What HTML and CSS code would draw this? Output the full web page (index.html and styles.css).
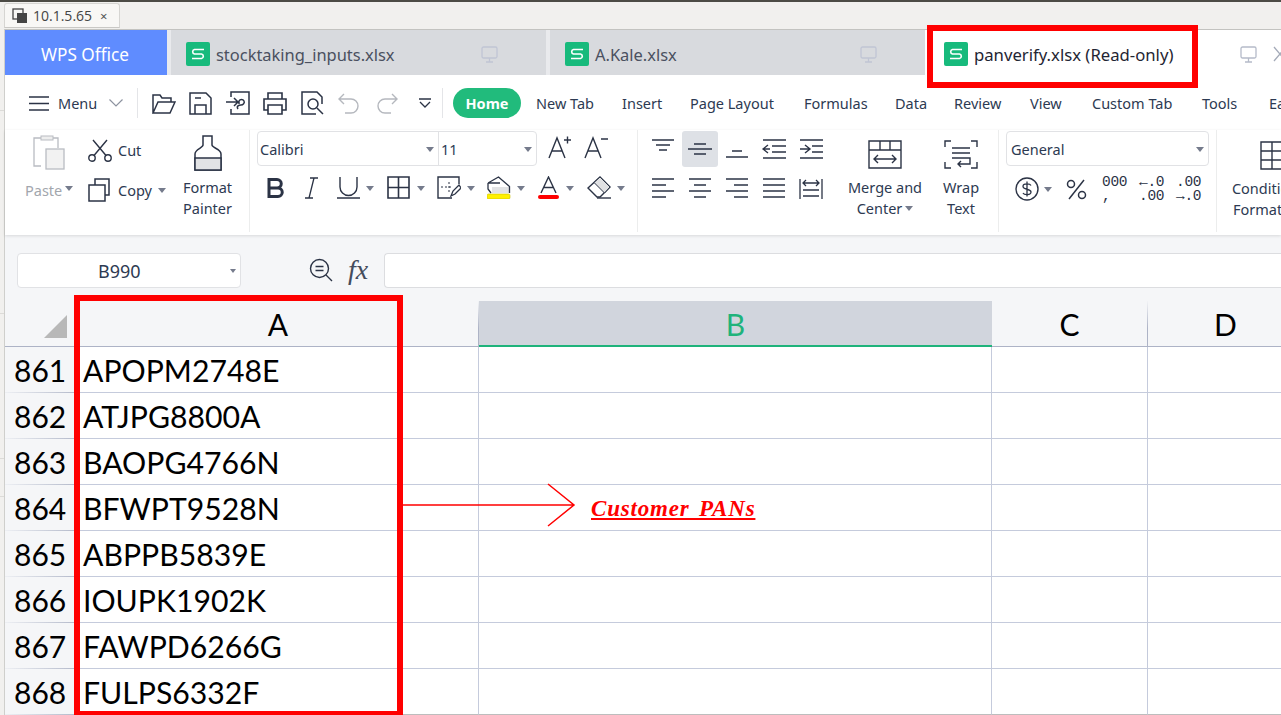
FILE: index.html
```html
<!DOCTYPE html>
<html lang="en">
<head>
<meta charset="utf-8">
<title>panverify.xlsx</title>
<link rel="stylesheet" href="styles.css">
</head>
<body>
<svg class="defs" width="0" height="0">
  <symbol id="logo" viewBox="0 0 24 24">
    <rect width="24" height="24" rx="2" fill="#17ba7c"/>
    <path d="M18 7.500H8.500a2.300 2.300 0 0 0 0 4.500h7a2.300 2.300 0 0 1 0 4.500H6" fill="none" stroke="#fff" stroke-width="1.600"/>
  </symbol>
  <symbol id="monitor" viewBox="0 0 17 17">
    <rect x="1" y="1" width="15" height="11" rx="1.500" fill="none" stroke="currentColor" stroke-width="1.300"/>
    <path d="M8.500 12v4M5 16h7" stroke="currentColor" stroke-width="1.300" fill="none"/>
  </symbol>
</svg>

<header class="browser">
  <div class="browser-tab">
    <svg class="browser-icon" width="16" height="16" viewBox="0 0 16 16"><rect x="1" y="1" width="10" height="10" fill="#f7f6f4" stroke="#444" stroke-width="1.300"/><rect x="5" y="5" width="10" height="10" fill="#444"/></svg>
    <span class="browser-title">10.1.5.65</span>
    <span class="browser-close">×</span>
  </div>
</header>

<main class="app">
  <nav class="tabs">
    <div class="tab-home">WPS Office</div>
    <div class="doc-tab doc-tab-gray">
      <svg class="logo" width="24" height="24"><use href="#logo"/></svg>
      <span class="doc-name">stocktaking_inputs.xlsx</span>
      <svg class="monitor" width="17" height="17"><use href="#monitor"/></svg>
    </div>
    <div class="doc-tab doc-tab-gray">
      <svg class="logo" width="24" height="24"><use href="#logo"/></svg>
      <span class="doc-name">A.Kale.xlsx</span>
      <svg class="monitor" width="17" height="17"><use href="#monitor"/></svg>
    </div>
    <div class="doc-tab doc-tab-active">
      <svg class="logo" width="24" height="24"><use href="#logo"/></svg>
      <span class="doc-name doc-name-active">panverify.xlsx (Read-only)</span>
      <svg class="monitor" width="17" height="17"><use href="#monitor"/></svg>
      <svg class="tab-x" width="14" height="16" viewBox="0 0 14 16"><path d="M1 1l12 14M13 1L1 15" stroke="#a4aab8" stroke-width="1.300" fill="none"/></svg>
    </div>
  </nav>

  <div class="menu-row">
    <div class="menu-btn">
      <svg width="20" height="15" viewBox="0 0 20 15"><path d="M0 1h20M0 7.500h20M0 14h20" stroke="#2b3345" stroke-width="1.300"/></svg>
      <span class="menu-label">Menu</span>
      <svg class="menu-chev" width="14" height="8" viewBox="0 0 14 8"><path d="M.5.5L7 7l6.500-6.500" stroke="#8d93a0" stroke-width="1.200" fill="none"/></svg>
    </div>
    <div class="qa">
      <svg width="24" height="21" viewBox="0 0 24 21"><path d="M1 20V2h7l2 3h9v4M1 20h17l5-11H6L1 20z" fill="none" stroke="#2b3345" stroke-width="1.500"/></svg>
      <svg width="23" height="23" viewBox="0 0 23 23"><path d="M1 1h16l5 5v16H1zM6 22v-9h11v9M6 6h6" fill="none" stroke="#2b3345" stroke-width="1.500"/></svg>
      <svg class="qa-bump" width="24" height="24" viewBox="0 0 24 24"><path d="M5 6V1h18v22H5v-5M0 11h11M8 7l4 4-4 4M12 18c-2-3 1-4 3-4s4-2 3-4-4-2-5 0v3" fill="none" stroke="#2b3345" stroke-width="1.500"/></svg>
      <svg width="24" height="23" viewBox="0 0 24 23"><path d="M5 7V1h14v6M5 18H1V7h22v11h-4M5 13h14v9H5z" fill="none" stroke="#2b3345" stroke-width="1.600"/></svg>
      <svg class="qa-bump" width="23" height="24" viewBox="0 0 23 24"><path d="M21 13V6l-5-5H1v22h14" fill="none" stroke="#2b3345" stroke-width="1.500"/><circle cx="12" cy="13" r="5" fill="none" stroke="#2b3345" stroke-width="1.500"/><path d="M16 17l6 6" stroke="#2b3345" stroke-width="1.500"/></svg>
      <svg class="qa-undo" width="21" height="21" viewBox="0 0 21 21"><path d="M6 1L1 6l5 5M1 6h12a7 7 0 0 1 0 14H7" fill="none" stroke="#b5b8be" stroke-width="1.400"/></svg>
      <svg class="qa-redo" width="21" height="21" viewBox="0 0 21 21"><path d="M15 1l5 5-5 5M20 6H8a7 7 0 0 0 0 14h6" fill="none" stroke="#b5b8be" stroke-width="1.400"/></svg>
      <svg class="qa-more" width="12" height="11" viewBox="0 0 12 11"><path d="M0 1h12M1 4l5 5 5-5" fill="none" stroke="#2b3345" stroke-width="1.300"/></svg>
    </div>
    <div class="ribbon-tabs">
      <span class="rt rt-home">Home</span>
      <span class="rt rt-newtab">New Tab</span>
      <span class="rt rt-insert">Insert</span>
      <span class="rt rt-layout">Page Layout</span>
      <span class="rt rt-formulas">Formulas</span>
      <span class="rt rt-data">Data</span>
      <span class="rt rt-review">Review</span>
      <span class="rt rt-view">View</span>
      <span class="rt rt-custom">Custom Tab</span>
      <span class="rt rt-tools">Tools</span>
      <span class="rt">Easy</span>
    </div>
  </div>

  <section class="ribbon">
    <div class="group group-clip">
      <div class="paste">
        <svg width="32" height="35" viewBox="0 0 32 35"><path d="M8 31H1V3h7M18 3h7v10" fill="none" stroke="#b9bcc2" stroke-width="1.300"/><rect x="8" y="1" width="12" height="4" fill="#eee" stroke="#b9bcc2"/><rect x="13" y="14" width="18" height="20" fill="#f2f2f2" stroke="#b9bcc2" stroke-width="1.300"/></svg>
        <span class="paste-label">Paste<i class="caret caret-up"></i></span>
      </div>
      <div class="cutcopy">
        <div class="cc-row">
          <svg width="24" height="23" viewBox="0 0 24 23"><circle cx="4" cy="19" r="3.200" fill="none" stroke="#2b3345" stroke-width="1.400"/><circle cx="20" cy="19" r="3.200" fill="none" stroke="#2b3345" stroke-width="1.400"/><path d="M6 16.500L19 1M18 16.500L5 1" stroke="#2b3345" stroke-width="1.400" fill="none"/></svg>
          <span class="cc-label">Cut</span>
        </div>
        <div class="cc-row">
          <svg class="copy-icon" width="22" height="24" viewBox="0 0 22 24"><path d="M7 7V1h14v16h-4" fill="none" stroke="#2b3345" stroke-width="1.500"/><rect x="1" y="7" width="16" height="16" fill="#fff" stroke="#2b3345" stroke-width="1.500"/></svg>
          <span class="cc-label">Copy</span><i class="caret caret-copy"></i>
        </div>
      </div>
      <div class="bigbtn painter">
        <svg width="28" height="37" viewBox="0 0 28 37"><path d="M9 1h9v9c0 3 9 4 9 9v16H1V19c0-5 8-6 8-9z" fill="#fff" stroke="#2b3345" stroke-width="1.500"/><path d="M1 23h26v12H1z" fill="#e2e3e5" stroke="#2b3345" stroke-width="1.500"/></svg>
        <span class="bigtext">Format<br>Painter</span>
      </div>
    </div>

    <div class="group group-font">
      <div class="font-row1">
        <div class="selects">
          <div class="sel sel-font">Calibri<i class="caret caret-sel"></i></div>
          <div class="sel sel-size">11<i class="caret caret-sel"></i></div>
        </div>
        <svg class="aplus" width="24" height="24" viewBox="0 0 24 24"><path d="M1 23L9 3l8 20M4 16h10M16 5h7M19.500 1.500v7" fill="none" stroke="#2b3345" stroke-width="1.400"/></svg>
        <svg class="aminus" width="24" height="24" viewBox="0 0 24 24"><path d="M1 23L9 3l8 20M4 16h10M17 4h7" fill="none" stroke="#2b3345" stroke-width="1.400"/></svg>
      </div>
      <div class="font-row2">
        <svg width="18" height="20" viewBox="0 0 18 20"><path d="M2 1.500h8a4 4 0 0 1 0 8.500H2zM2 10h9a4.200 4.200 0 0 1 0 8.500H2z" fill="none" stroke="#2b3345" stroke-width="3"/></svg>
        <svg width="13" height="22" viewBox="0 0 13 22"><path d="M9 1L4 21M5 1h8M0 21h8" fill="none" stroke="#2b3345" stroke-width="1.300"/></svg>
        <svg width="23" height="23" viewBox="0 0 23 23"><path d="M3 1v10a8.500 8.500 0 0 0 17 0V1M0 22h23" fill="none" stroke="#2b3345" stroke-width="1.400"/></svg>
        <i class="caret"></i>
        <svg width="23" height="23" viewBox="0 0 23 23"><path d="M1 1h21v21H1zM11.500 1v21M1 11.500h21" fill="none" stroke="#2b3345" stroke-width="1.600"/></svg>
        <i class="caret"></i>
        <svg width="24" height="23" viewBox="0 0 24 23"><path d="M22 8V1H1v21h14" fill="none" stroke="#2b3345" stroke-width="1.400"/><path d="M4 11h10M12 6v10" stroke="#2b3345" stroke-dasharray="2 2" fill="none"/><path d="M14 20l2-5 6-6 2 3-6 6z" fill="#fff" stroke="#2b3345" stroke-width="1.300"/></svg>
        <i class="caret"></i>
        <svg width="24" height="23" viewBox="0 0 24 23"><path d="M5 11h17.500v6H5z" fill="#e2e3e5"/><path d="M1 7L11.500 1l11 9.500V17M1 7h12M1 7v6l3 4" fill="none" stroke="#2b3345" stroke-width="1.300"/><rect y="18" width="23" height="5" rx="1.500" fill="#fff000" stroke="#c8bd00" stroke-width=".6"/></svg>
        <i class="caret"></i>
        <svg width="21" height="23" viewBox="0 0 21 23"><path d="M3 17L10.500 1 18 17M6 11.500h9" fill="none" stroke="#2b3345" stroke-width="1.400"/><rect y="19" width="21" height="4" rx="2" fill="#f00"/></svg>
        <i class="caret"></i>
        <svg width="24" height="23" viewBox="0 0 24 23"><path d="M1 12L13 1l10 10-10 10H10z" fill="#fff" stroke="#2b3345" stroke-width="1.400"/><path d="M7 6.500l10.500 10.500L23 11 13 1z" fill="#e0e1e3" stroke="#2b3345" stroke-width="1"/><path d="M10 22h14" stroke="#2b3345" stroke-width="1.400"/></svg>
        <i class="caret"></i>
      </div>
    </div>

    <div class="group group-align">
      <div class="align-grid">
        <span class="al"><svg width="22" height="12" viewBox="0 0 22 12"><path d="M0 1h22M4 6h14M7 11h8" stroke="#2b3345" stroke-width="1.400"/></svg></span>
        <span class="al al-on"><svg width="24" height="12" viewBox="0 0 24 12"><path d="M6 1h12M0 6h24M6 11h12" stroke="#2b3345" stroke-width="1.400"/></svg></span>
        <span class="al"><svg class="al-low" width="22" height="8" viewBox="0 0 22 8"><path d="M6 1h10M0 7h22" stroke="#2b3345" stroke-width="1.400"/></svg></span>
        <span class="al"><svg width="24" height="20" viewBox="0 0 24 20"><path d="M1 1h23M10 7h14M10 13h14M1 19h23M6 6L1 10l5 4M1 10h7" fill="none" stroke="#2b3345" stroke-width="1.400"/></svg></span>
        <span class="al"><svg width="24" height="20" viewBox="0 0 24 20"><path d="M1 1h23M13 7h11M13 13h11M1 19h23M6 6l5 4-5 4M11 10H1" fill="none" stroke="#2b3345" stroke-width="1.400"/></svg></span>
        <span class="al"><svg width="22" height="20" viewBox="0 0 22 20"><path d="M0 1h22M0 7h14M0 13h22M0 19h14" stroke="#2b3345" stroke-width="1.400"/></svg></span>
        <span class="al"><svg width="22" height="20" viewBox="0 0 22 20"><path d="M0 1h22M5 7h12M0 13h22M5 19h12" stroke="#2b3345" stroke-width="1.400"/></svg></span>
        <span class="al"><svg width="22" height="20" viewBox="0 0 22 20"><path d="M0 1h22M8 7h14M0 13h22M8 19h14" stroke="#2b3345" stroke-width="1.400"/></svg></span>
        <span class="al"><svg width="22" height="20" viewBox="0 0 22 20"><path d="M0 1h22M0 7h22M0 13h22M0 19h22" stroke="#2b3345" stroke-width="1.400"/></svg></span>
        <span class="al"><svg width="24" height="21" viewBox="0 0 24 21"><path d="M1 1v20M23 1v20M4 12h16M4 18h16M4 5h16M7 2L4 5l3 3M17 2l3 3-3 3" fill="none" stroke="#2b3345" stroke-width="1.300"/></svg></span>
      </div>
      <div class="bigbtn merge">
        <svg width="34" height="29" viewBox="0 0 34 29"><path d="M1 1h32v27H1zM1 10h32M12 1v9M22 1v9M6 19h22M10 15l-4 4 4 4M24 15l4 4-4 4" fill="none" stroke="#2b3345" stroke-width="1.400"/></svg>
        <span class="bigtext">Merge and<br>Center<i class="caret caret-up caret-inline"></i></span>
      </div>
      <div class="bigbtn wrap">
        <svg width="34" height="29" viewBox="0 0 34 29"><path d="M7 1H1v6M27 1h6v6M1 22v6h6M33 22v6h-6M8 8h18M8 13h18M8 18h18v6H14M17 21l-3 3 3 3" fill="none" stroke="#2b3345" stroke-width="1.400"/></svg>
        <span class="bigtext">Wrap<br>Text</span>
      </div>
    </div>

    <div class="group group-num">
      <div class="sel sel-general">General<i class="caret caret-sel"></i></div>
      <div class="num-row">
        <svg width="24" height="24" viewBox="0 0 24 24"><circle cx="12" cy="12" r="11" fill="none" stroke="#2b3345" stroke-width="1.400"/><path d="M16 8.500c-1-2-8-2.500-8 1s8 2 8 5.500-7 3-8 1M12 4.500v15" fill="none" stroke="#2b3345" stroke-width="1.300"/></svg>
        <i class="caret"></i>
        <svg width="21" height="21" viewBox="0 0 21 21"><circle cx="5" cy="5" r="3.500" fill="none" stroke="#2b3345" stroke-width="1.500"/><circle cx="16" cy="16" r="3.500" fill="none" stroke="#2b3345" stroke-width="1.500"/><path d="M18 1L3 20" stroke="#2b3345" stroke-width="1.500"/></svg>
        <span class="num-glyph num-thousand">000<br>,</span>
        <span class="num-glyph">←.0<br>.00</span>
        <span class="num-glyph">.00<br>→.0</span>
      </div>
    </div>

    <div class="group group-cond">
      <svg class="cond-icon" width="34" height="29" viewBox="0 0 34 29"><path d="M1 1h32v27H1zM1 10h32M1 19h32M12 1v27M22 1v27" fill="none" stroke="#2b3345" stroke-width="1.400"/></svg>
      <span class="bigtext cond-text">Conditional<br>Formatting</span>
    </div>
  </section>

  <section class="formula">
    <div class="namebox">B990<i class="caret caret-name"></i></div>
    <svg class="f-zoom" width="24" height="24" viewBox="0 0 24 24"><circle cx="10.500" cy="10.500" r="9" fill="none" stroke="#2b3345" stroke-width="1.400"/><path d="M6.500 8.500h8M6.500 12.500h8M17 17l6 6" stroke="#2b3345" stroke-width="1.400"/></svg>
    <span class="f-fx">fx</span>
    <div class="f-input"></div>
  </section>

  <section class="sheet">
    <div class="corner"><i class="corner-tri"></i></div>
    <div class="col col-a">A</div>
    <div class="col-slot"><div class="col col-active">B</div></div>
    <div class="col">C</div>
    <div class="col">D</div>

    <div class="rn">861</div><div class="cell">APOPM2748E</div><div class="cell"></div><div class="cell"></div><div class="cell"></div>
    <div class="rn">862</div><div class="cell">ATJPG8800A</div><div class="cell"></div><div class="cell"></div><div class="cell"></div>
    <div class="rn">863</div><div class="cell">BAOPG4766N</div><div class="cell"></div><div class="cell"></div><div class="cell"></div>
    <div class="rn">864</div><div class="cell">BFWPT9528N</div><div class="cell"></div><div class="cell"></div><div class="cell"></div>
    <div class="rn">865</div><div class="cell">ABPPB5839E</div><div class="cell"></div><div class="cell"></div><div class="cell"></div>
    <div class="rn">866</div><div class="cell">IOUPK1902K</div><div class="cell"></div><div class="cell"></div><div class="cell"></div>
    <div class="rn">867</div><div class="cell">FAWPD6266G</div><div class="cell"></div><div class="cell"></div><div class="cell"></div>
    <div class="rn">868</div><div class="cell">FULPS6332F</div><div class="cell"></div><div class="cell"></div><div class="cell"></div>
  </section>
</main>

<div class="mark mark-tab"></div>
<div class="mark mark-col"></div>
<svg class="mark-arrow" width="176" height="44" viewBox="0 0 176 44"><path d="M0 22h172M146 1l26 21-26 21" fill="none" stroke="#f00" stroke-width="1.500"/></svg>
<div class="mark-text">Customer PANs</div>
</body>
</html>
```

FILE: styles.css
```css
* { box-sizing: border-box; }
html, body { margin: 0; padding: 0; }
body {
  width: 1281px;
  height: 715px;
  overflow: hidden;
  position: relative;
  background:
    linear-gradient(#dcdbd8, #dcdbd8) 0 110px / 4px 1px no-repeat,
    linear-gradient(#dcdbd8, #dcdbd8) 0 313px / 4px 1px no-repeat,
    linear-gradient(#dcdbd8, #dcdbd8) 0 458px / 4px 1px no-repeat,
    linear-gradient(#dcdbd8, #dcdbd8) 0 496px / 4px 1px no-repeat,
    #f1f0ee;
  font-family: "Noto Sans", "Open Sans", sans-serif;
  color: #2d3a52;
}
svg { display: block; flex: none; }
.defs { position: absolute; }
i { display: block; font-style: normal; }

.browser {
  height: 29px;
  border-top: 2px solid #4c4b45;
  background: #f1f0ee;
  padding: 1px 0 0 4px;
}
.browser-tab {
  width: 116px;
  height: 25px;
  display: flex;
  align-items: center;
  padding-left: 7px;
  background: #f8f7f5;
  border: 1px solid #d6d5d2;
  border-bottom-color: #c9c8c5;
  border-radius: 3px 3px 0 0;
}
.browser-title { margin-left: 5px; font-size: 14px; color: #444; font-family: "Open Sans", sans-serif; }
.browser-close { margin-left: 8px; font-size: 13px; color: #555; }

.app { margin-left: 4px; width: 1277px; border-top: 1px solid #c3c3c0; border-left: 1px solid #cfcfcc; background: #fff; }

.tabs { height: 45px; display: flex; background: #e9eaed; }
.tab-home {
  width: 162px;
  background: #5f8cff;
  color: #fff;
  font-size: 17.200px;
  display: flex;
  align-items: center;
  justify-content: center;
  padding: 4px 2px 0 0;
}
.doc-tab { display: flex; align-items: center; padding: 3px 0 0 15px; flex: none; }
.doc-tab-gray { width: 375px; background: #d8dade; margin-left: 4px; color: #4a5060; }
.doc-tab-active { flex: 1; background: #fff; padding-left: 19px; margin-left: 0; }
.logo { margin-right: 6px; }
.doc-name { font-size: 16.450px; }
.doc-name-active { color: #1f2533; font-size: 16.700px; }
.monitor { margin-left: auto; margin-right: 48px; color: #c0c5d4; }
.doc-tab-active .monitor { margin-right: 16px; color: #b5bbc9; }
.tab-x { margin-right: -6px; }

.menu-row { height: 55px; display: flex; align-items: flex-start; padding-top: 13px; background: #fff; }
.menu-btn { flex: none; width: 133px; height: 30px; padding-left: 24px; display: flex; align-items: center; border-right: 1px solid #e4e5e8; }
.menu-label { font-size: 14.500px; margin-left: 9px; }
.menu-chev { margin-left: 12px; }
.qa { flex: none; width: 305px; height: 30px; display: flex; align-items: center; padding-left: 14px; gap: 13px; border-right: 1px solid #e4e5e8; }
.qa-bump { margin-left: 1px; }
.qa-undo { margin-left: 1px; }
.qa-redo { margin-left: 5px; }
.qa-more { margin-left: 8px; }
.ribbon-tabs { display: flex; align-items: center; height: 30px; margin-left: 10px; font-size: 14.500px; white-space: nowrap; }
.rt { display: block; flex: none; }
.rt-home { width: 68px; height: 30px; line-height: 30px; text-align: center; background: #21bb7c; color: #fff; font-weight: 700; border-radius: 15px; }
.rt-newtab { margin-left: 15px; width: 86px; }
.rt-insert { width: 68px; }
.rt-layout { width: 114px; }
.rt-formulas { width: 91px; }
.rt-data { width: 59px; }
.rt-review { width: 76px; }
.rt-view { width: 62px; }
.rt-custom { width: 110px; }
.rt-tools { width: 67px; }

.ribbon { height: 105px; display: flex; background: #fff; box-shadow: 0 1px 3px rgba(0,0,0,.12); position: relative; font-size: 14.500px; }
.group { height: 102px; border-right: 1px solid #eceded; flex: none; }
.group-clip { width: 245px; display: flex; }
.paste { width: 83px; padding: 5px 0 0 20px; display: flex; flex-direction: column; color: #a2a6ad; }
.paste svg { margin-left: 8px; }
.paste-label { display: flex; margin-top: 10px; }
.cutcopy { width: 92px; }
.cc-row { display: flex; align-items: center; height: 40px; }
.cc-label { margin-left: 6px; }
.copy-icon { margin-right: 2px; }
.caret { width: 0; height: 0; border: 4px solid transparent; border-top: 5px solid #757b8c; border-bottom: 0; }
.caret-up { margin: 6px 0 0 3px; }
.caret-copy { margin-left: 6px; }
.caret-inline { display: inline-block; vertical-align: middle; margin: 0 0 4px 3px; }
.bigbtn { display: flex; flex-direction: column; align-items: center; }
.bigtext { display: block; text-align: center; line-height: 21px; white-space: nowrap; }
.painter { width: 65px; padding-top: 5px; margin-left: -5px; }
.painter .bigtext { margin-top: 5px; }

.group-font { width: 388px; padding: 1px 0 0 7px; }
.font-row1 { display: flex; align-items: center; height: 35px; }
.selects { width: 280px; height: 35px; display: flex; border: 1px solid #e1e2e5; border-radius: 4px; }
.sel { font-size: 14.500px; display: flex; align-items: center; padding: 1px 0 0 2px; }
.sel-font { width: 181px; border-right: 1px solid #e1e2e5; }
.sel-size { flex: 1; }
.caret-sel { margin-left: auto; margin-right: 4px; }
.aplus { margin-left: 11px; margin-top: -3px; }
.aminus { margin-left: 12px; margin-top: -3px; }
.font-row2 {
  display: grid;
  grid-template-columns: 38px 32px 29px 21px 30px 20px 30px 20px 30px 21px 28px 21px 30px 8px;
  align-items: center;
  margin: 9px 0 0 10px;
  height: 25px;
}
.font-row2 .caret { margin-top: 1px; }

.group-align { width: 361px; padding: 1px 0 0 7px; display: flex; }
.align-grid { display: grid; grid-template-columns: repeat(5, 36px); column-gap: 1px; row-gap: 3px; grid-auto-rows: 36px; width: 185px; }
.al { display: flex; align-items: center; justify-content: center; }
.al-on { background: #dee1e6; border-radius: 3px; }
.al-low { margin-top: 10px; }
.al:first-child svg { margin-top: -8px; }
.merge { width: 90px; margin-left: 10px; padding-top: 9px; }
.merge .bigtext, .wrap .bigtext { margin-top: 8px; }
.wrap { width: 62px; margin-left: 0; padding-top: 9px; }

.group-num { width: 218px; padding: 1px 0 0 7px; }
.sel-general { width: 203px; height: 35px; border: 1px solid #e1e2e5; border-radius: 4px; padding-left: 4px; }
.num-row { display: grid; grid-template-columns: 29px 22px 36px 37px 37px 30px; align-items: center; margin: 9px 0 0 9px; height: 25px; }
.num-glyph { font-family: "Liberation Mono", monospace; font-size: 14.500px; letter-spacing: -.3px; line-height: 14px; text-align: left; color: #2b3345; }

.group-cond { flex: 1; position: relative; border-right: 0; padding: 11px 0 0 43px; overflow: hidden; }
.cond-text { margin: 8px 0 0 -29px; text-align: center; width: 80px; }

.formula { height: 66px; display: flex; align-items: flex-start; padding: 18px 0 0 12px; background: #f5f6f8; }
.namebox { width: 224px; height: 35px; background: #fff; border: 1px solid #e1e2e5; border-radius: 4px; display: flex; align-items: center; padding-left: 80px; font-size: 18px; }
.caret-name { margin-left: auto; margin-right: 4px; border-left-width: 3.500px; border-right-width: 3.500px; border-top-width: 4px; }
.f-zoom { margin: 5px 0 0 68px; flex: none; }
.f-fx { margin: 3px 0 0 15px; font-family: "Liberation Serif", serif; font-style: italic; font-size: 28px; line-height: 28px; width: 36px; flex: none; color: #444c5c; }
.f-input { flex: 1; height: 35px; background: #fff; border: 1px solid #dcdde0; border-right: 0; border-radius: 4px 0 0 4px; }

.sheet {
  display: grid;
  grid-template-columns: 70px 404px 513px 156px 156px;
  grid-template-rows: 46px repeat(8, 46px);
  font-family: Lato, "Open Sans", sans-serif;
  color: #000;
  background: #fff;
  overflow: hidden;
}
.corner { background: #f5f6f8; border-bottom: 1px solid #adb3c6; display: flex; align-items: flex-end; justify-content: flex-end; padding: 0 8px 8px 0; }
.corner-tri { width: 0; height: 0; border-style: solid; border-width: 0 0 23px 23px; border-color: transparent transparent #b8b8b8 transparent; }
.col {
  background: #f5f6f8;
  font-size: 30px;
  display: flex;
  align-items: center;
  justify-content: center;
  padding-top: 1px;
  border-bottom: 1px solid #adb3c6;
  border-right: 1px solid;
  border-image: linear-gradient(to bottom, #f5f6f8, #adb3c6 60%) 1;
  border-image-slice: 1;
}
.col-a { padding-left: 3px; }
.col-slot { display: flex; }
.col-active { flex: 1; background: #d1d5dd; color: #1fb37b; border: 0; border-bottom: 2px solid #1fb37b; border-image: none; }
.rn {
  font-size: 30px;
  padding: 1px 0 0 9px;
  display: flex;
  align-items: center;
  background: #f5f6f8;
  border-bottom: 1px solid;
  border-image: linear-gradient(to right, #eef0f4, #b4bacb) 1;
}
.cell { font-size: 30.200px; padding: 1px 0 0 8px; display: flex; align-items: center; border-bottom: 1px solid #c5cbdc; border-right: 1px solid #c5cbdc; white-space: nowrap; }
.cell:nth-last-child(-n+4) { border-bottom-color: #bdbdbd; }

.mark { position: absolute; border: 6px solid #f00; pointer-events: none; }
.mark-tab { left: 927px; top: 25px; width: 271px; height: 63px; }
.mark-col { left: 74px; top: 295px; width: 329px; height: 422px; }
.mark-arrow { position: absolute; left: 402px; top: 483px; }
.mark-text {
  position: absolute;
  left: 591px;
  top: 495px;
  font-family: "Liberation Serif", serif;
  font-style: italic;
  font-weight: 700;
  font-size: 23px;
  line-height: 27px;
  letter-spacing: .8px;
  word-spacing: 3px;
  color: #f00;
  text-decoration: underline;
  white-space: nowrap;
}
```
